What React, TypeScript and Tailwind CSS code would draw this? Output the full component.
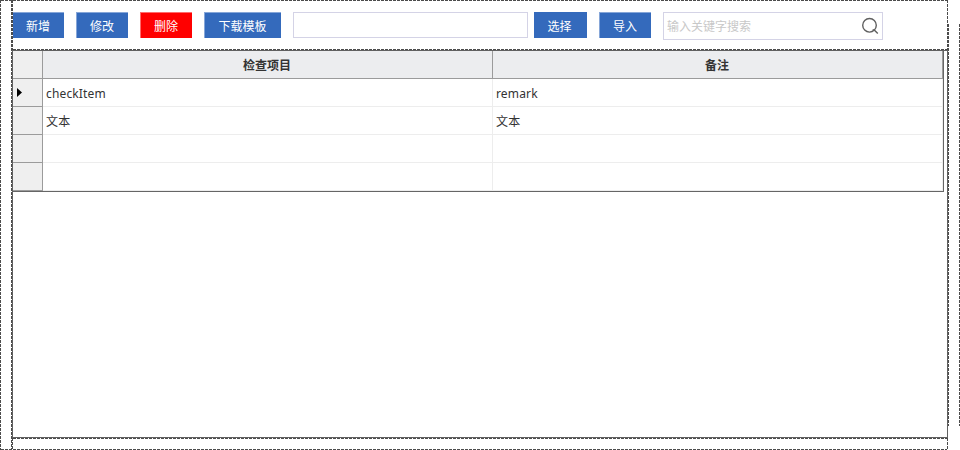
import React from "react";

const hDash = "h-px shrink-0 bg-[repeating-linear-gradient(to_right,#4c4c4c_0_3px,transparent_3px_4px)]";
const vDash = "w-px shrink-0 bg-[repeating-linear-gradient(to_bottom,#4c4c4c_0_3px,transparent_3px_4px)]";

function Button({ label, className }: { label: string; className: string }) {
  return (
    <button className={`flex h-[26px] shrink-0 items-center justify-center pt-[2px] pr-px text-[12px] leading-none text-white ${className}`}>
      {label}
    </button>
  );
}

const blue = "border-t border-l border-[#86a6d8] bg-[#346abc]";

function Toolbar() {
  return (
    <div className="flex grow items-start pt-[11px]">
      <Button label="新增" className="w-[51px] border-t border-[#86a6d8] bg-[#346abc]" />
      <Button label="修改" className={`ml-3 w-[52px] ${blue}`} />
      <Button label="删除" className="ml-3 w-[52px] border-t border-l border-[#ff6b6b] bg-[#ff0000]" />
      <Button label="下载模板" className={`ml-3 w-[77px] ${blue}`} />
      <input className="ml-3 h-[26px] w-[235px] shrink-0 border border-[#d4d3e6] bg-white outline-none" />
      <Button label="选择" className="ml-1.5 w-[53px] border-t border-r border-[#346abc] bg-[#346abc]" />
      <Button label="导入" className={`ml-3 w-[52px] ${blue}`} />
      <div className="ml-3 flex h-7 w-[220px] shrink-0 items-center justify-between border border-[#d4d3e6] pr-[3px] pl-[3px]">
        <span className="pt-[2px] text-[12px] leading-none text-[#c8c8c8]">输入关键字搜索</span>
        <svg width="18" height="18" viewBox="0 0 18 18" fill="none" stroke="#606060" strokeWidth="1.4">
          <circle cx="8.5" cy="8.3" r="6.8" />
          <path d="M11.6 12.9 H13.2 L16.8 16.6" />
        </svg>
      </div>
    </div>
  );
}

const rows = [
  { item: "checkItem", remark: "remark", current: true },
  { item: "文本", remark: "文本" },
  { item: "", remark: "" },
  { item: "", remark: "" },
];

function Grid() {
  return (
    <div className="h-[141px] w-[931px] border-r border-b border-[#666] text-[12px] leading-none text-[#333]">
      <div className="flex h-7 border-b border-[#9b9b9b] bg-[#ecedef] font-bold">
        <div className="w-[30px] border-r border-[#9b9b9b] bg-[#efefef]" />
        <div className="flex w-[450px] items-center justify-center border-r border-[#9b9b9b] pt-[2px] pr-px">检查项目</div>
        <div className="flex w-[450px] items-center justify-center border-r border-[#9b9b9b] pt-[2px] pr-px">备注</div>
      </div>
      {rows.map((row, i) => (
        <div key={i} className="flex h-7">
          <div className="flex w-[30px] items-center border-r border-b border-[#9b9b9b] bg-[#efefef] pl-1">
            {row.current && (
              <svg width="5" height="9" viewBox="0 0 5 9">
                <path d="M0 0 L5 4.5 L0 9 Z" fill="#000" />
              </svg>
            )}
          </div>
          <div className="flex w-[450px] items-center border-r border-b border-[#ededed] pt-[2px] pl-[3px] tracking-[0.15px]">{row.item}</div>
          <div className="flex w-[450px] items-center border-r border-b border-[#ededed] pt-[2px] pl-[3px] tracking-[0.15px]">{row.remark}</div>
        </div>
      ))}
    </div>
  );
}

export default function App() {
  return (
    <div className="flex h-[450px] w-[960px] overflow-hidden bg-white font-['Noto_Sans','Noto_Sans_CJK_SC',sans-serif]">
      <div className="flex w-3 shrink-0">
        <div className={vDash} />
        <div className="flex w-2.5 flex-col justify-between">
          <div className={hDash} />
          <div className={hDash} />
        </div>
        <div className={vDash} />
      </div>
      <div className="flex w-[936px] shrink-0 flex-col">
        <div className="flex h-[50px]">
          <div className={vDash} />
          <div className="flex w-[934px] flex-col">
            <div className={hDash} />
            <Toolbar />
            <div className={hDash} />
          </div>
          <div className={vDash} />
        </div>
        <div className="h-[388px] border border-[#606060]">
          <Grid />
        </div>
        <div className="flex h-3">
          <div className={vDash} />
          <div className="flex w-[934px] flex-col justify-between">
            <div className={hDash} />
            <div className={hDash} />
          </div>
          <div className={vDash} />
        </div>
      </div>
      <div className="mt-6 flex h-[402px] w-3 shrink-0 justify-between">
        <div className={vDash} />
        <div className={vDash} />
      </div>
    </div>
  );
}
